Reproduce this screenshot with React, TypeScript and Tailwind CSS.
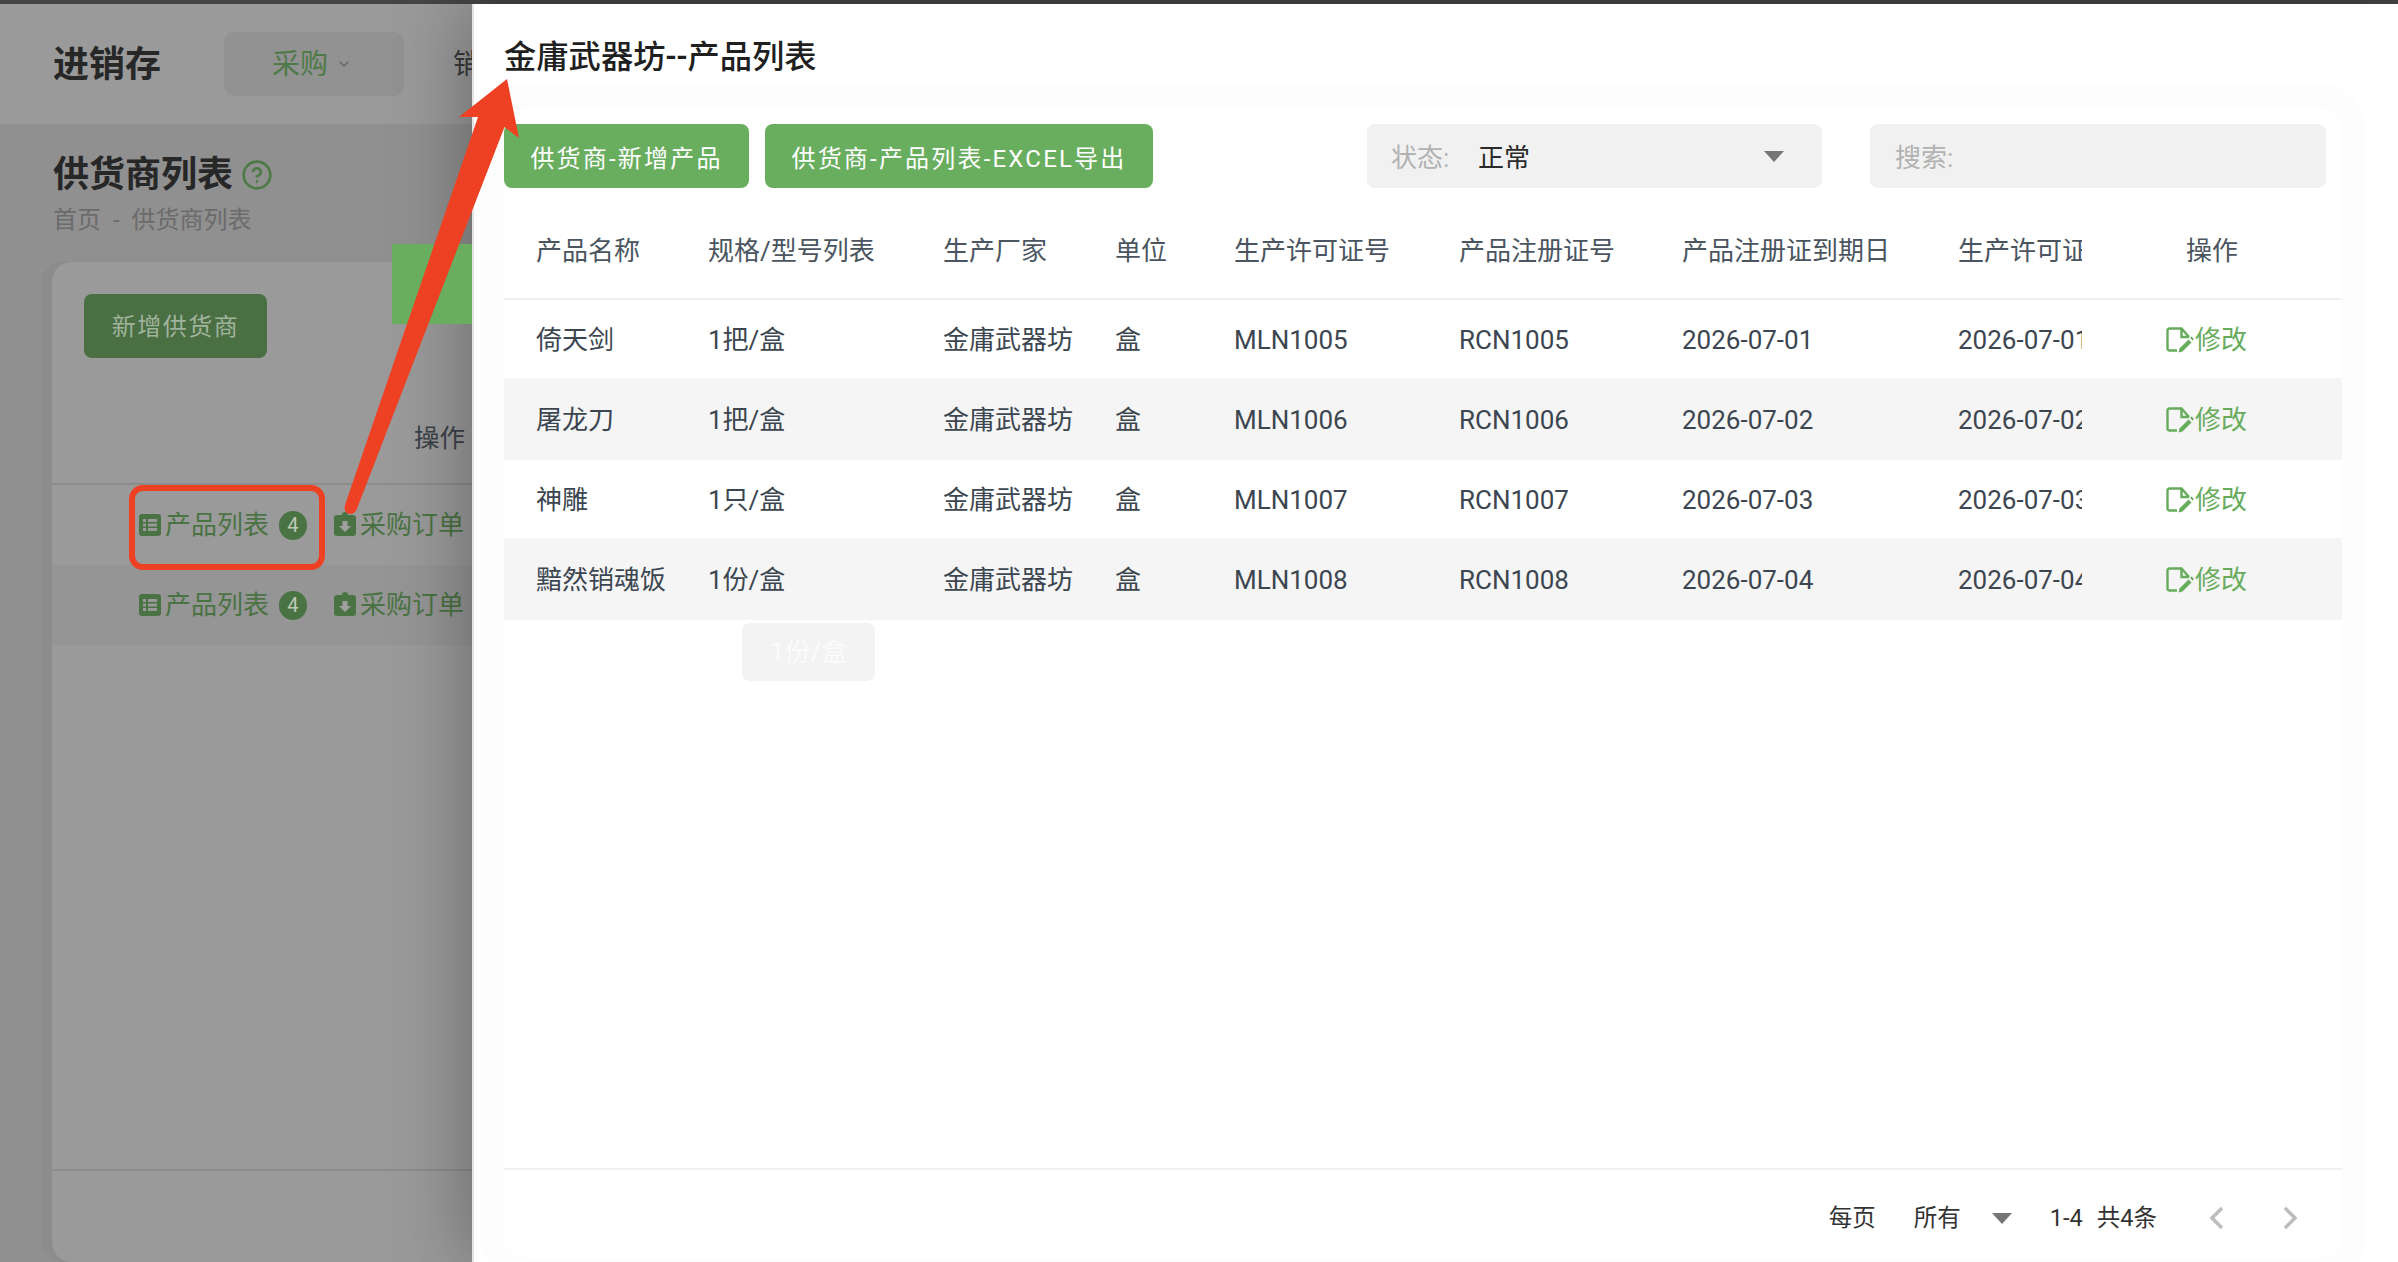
import React from "react";
import { ChevronDown, CircleHelp } from "lucide-react";

const rows = [
  ["倚天剑", "1把/盒", "MLN1005", "RCN1005", "2026-07-01", "h-[78px] bg-white"],
  ["屠龙刀", "1把/盒", "MLN1006", "RCN1006", "2026-07-02", "h-[82px] bg-[#f5f5f5]"],
  ["神雕", "1只/盒", "MLN1007", "RCN1007", "2026-07-03", "h-[78px] bg-white"],
  ["黯然销魂饭", "1份/盒", "MLN1008", "RCN1008", "2026-07-04", "h-[82px] bg-[#f5f5f5]"],
];

const heads = ["产品名称", "规格/型号列表", "生产厂家", "单位", "生产许可证号", "产品注册证号", "产品注册证到期日"];

const cols = "grid grid-cols-[172px_235px_172px_119px_225px_223px_276px_188px_228px] items-center";

function Cell({ children, clip }: { children: React.ReactNode; clip?: boolean }) {
  return (
    <div className="px-8 min-w-0">
      <div className={clip ? "overflow-hidden whitespace-nowrap" : "whitespace-nowrap"}>{children}</div>
    </div>
  );
}

function ListIcon() {
  return (
    <svg width="22" height="22" viewBox="0 0 22 22">
      <rect x="0" y="0" width="22" height="22" rx="3" fill="#4a7343" />
      <g fill="#999999">
        <rect x="4" y="5" width="3" height="3" />
        <rect x="9" y="5" width="9" height="3" />
        <rect x="4" y="9.500" width="3" height="3" />
        <rect x="9" y="9.500" width="9" height="3" />
        <rect x="4" y="14" width="3" height="3" />
        <rect x="9" y="14" width="9" height="3" />
      </g>
    </svg>
  );
}

function OrderIcon() {
  return (
    <svg width="22" height="24" viewBox="0 0 22 24" className="-mt-0.5">
      <path d="M3 3h5a3 3 0 0 1 6 0h5a3 3 0 0 1 3 3v15a3 3 0 0 1-3 3H3a3 3 0 0 1-3-3V6a3 3 0 0 1 3-3z" fill="#4a7343" />
      <path d="M8.500 9h5v5h3.500l-6 6-6-6h3.500z" fill="#9f9f9f" />
    </svg>
  );
}

function EditIcon() {
  return (
    <svg width="28" height="26" viewBox="0 0 28 26" className="shrink-0">
      <path
        d="M11 23.500H3.500a2 2 0 0 1-2-2V3.500a2 2 0 0 1 2-2H15.500l7.500 8.500M15.500 1.500V10H23"
        fill="none"
        stroke="#66ac5c"
        strokeWidth="2.400"
      />
      <path d="M13.500 21.500l9-9 3 3-9 9-4 1z" fill="#66ac5c" />
      <path d="M24 11l1.500-1.500 2.500 2.500-1.500 1.500z" fill="#66ac5c" />
    </svg>
  );
}

function Triangle() {
  return (
    <svg width="20" height="11" viewBox="0 0 20 11">
      <path d="M0 0h20L10 11z" fill="#757575" />
    </svg>
  );
}

function ActionRow({ bg }: { bg: string }) {
  return (
    <div className={`h-[80px] flex items-center justify-end pr-2 text-[26px] text-[#4a7343] ${bg}`}>
      <ListIcon />
      <span className="ml-1">产品列表</span>
      <span className="ml-[10px] w-[28px] h-[29px] rounded-full bg-[#4a7343] text-[#bcc9b9] text-[20px] flex items-center justify-center">4</span>
      <span className="ml-[27px]"><OrderIcon /></span>
      <span className="ml-1">采购订单</span>
    </div>
  );
}

export default function App() {
  return (
    <div
      className="relative w-[2398px] h-[1262px] overflow-hidden flex flex-col bg-white"
      style={{ fontFamily: 'Roboto, "Noto Sans CJK SC", sans-serif' }}
    >
      <div className="h-[4px] shrink-0 bg-[#454545]" />
      <div className="flex-1 flex min-h-0">
        {/* dimmed page */}
        <div className="w-[472px] shrink-0 overflow-hidden flex flex-col bg-[#909090]">
          <div className="h-[120px] shrink-0 bg-[#9a9a9a] flex items-center pl-[53px]">
            <span className="text-[36px] pt-[2px] font-bold text-[#272727] whitespace-nowrap">进销存</span>
            <div className="ml-[63px] w-[180px] h-[64px] shrink-0 rounded-[10px] bg-[#929292] flex items-center pl-[48px] text-[28px] text-[#4e7a47]">
              <span className="pt-[2px]">采购</span>
              <ChevronDown size={16} className="ml-2 text-[#5f6a5c]" />
            </div>
            <span className="ml-[49px] pt-[2px] text-[28px] text-[#3a3a3a] whitespace-nowrap">销售</span>
          </div>
          <div className="pl-[53px] pt-[26px] h-[138px] shrink-0">
            <div className="flex items-center h-[50px]">
              <span className="text-[36px] font-bold text-[#272727] whitespace-nowrap">供货商列表</span>
              <CircleHelp size={32} strokeWidth={2} className="ml-[8px] text-[#4e7a47]" />
            </div>
            <div className="mt-[2px] text-[24px] text-[#6b6b6b] whitespace-pre">首页  -  供货商列表</div>
          </div>
          <div className="ml-[52px] flex-1 min-h-0 rounded-l-[20px] bg-[#9a9a9a] shadow-[-10px_0_0_#8c8c8c] flex flex-col">
            <div className="pl-[32px] pt-[32px] h-[223px] shrink-0 border-b-2 border-[#8c8c8c] relative">
              <div className="w-[183px] h-[64px] pt-[2px] rounded-lg bg-[#4a6f43] text-[#a1b39d] text-[24px] tracking-[1.500px] flex items-center justify-center">新增供货商</div>
              <div className="absolute right-[7px] bottom-[26px] text-[25.500px] text-[#3a4148]">操作</div>
            </div>
            <ActionRow bg="" />
            <ActionRow bg="bg-[#959595]" />
            <div className="flex-1 border-b-2 border-[#8c8c8c]" />
            <div className="h-[91px] shrink-0" />
          </div>
        </div>

        {/* drawer */}
        <div className="relative z-10 flex-1 min-w-0 flex flex-col bg-white border-l-2 border-[#e4e4e4] shadow-[-6px_0_70px_rgba(0,0,0,0.3)] pl-[30px] pr-[56px]">
          <div className="h-[104px] shrink-0 pt-[33px]">
            <div className="text-[32.300px] leading-[40px] font-medium text-[#1f1f1f] whitespace-nowrap">金庸武器坊--产品列表</div>
          </div>
          <div className="relative flex-1 min-h-0 mb-[4px] flex flex-col rounded-[22px] bg-white shadow-[0_0_0_24px_#fdfdfd]">
            <div className="flex items-center pt-4 pr-4 shrink-0">
              <div className="w-[245px] h-[64px] pt-[5px] rounded-lg bg-[#69ae5f] text-white text-[24px] tracking-[2.200px] flex items-center justify-center whitespace-nowrap">供货商-新增产品</div>
              <div className="ml-4 w-[388px] h-[64px] pt-[5px] rounded-lg bg-[#69ae5f] text-white text-[24px] tracking-[2.200px] flex items-center justify-center whitespace-nowrap">供货商-产品列表-EXCEL导出</div>
              <div className="ml-auto w-[455px] h-[64px] rounded-lg bg-[#f1f1f1] flex items-center pl-[24px] pr-[38px] text-[26px]">
                <span className="w-[87px] pt-[5px] text-[#b2b2b2]">状态:</span>
                <span className="pt-[5px] text-[#2a2a2a]">正常</span>
                <span className="ml-auto flex"><Triangle /></span>
              </div>
              <div className="ml-[48px] w-[456px] h-[64px] pt-[5px] rounded-lg bg-[#f1f1f1] flex items-center pl-[25px] text-[26px] text-[#b2b2b2]">搜索:</div>
            </div>

            <div className={`${cols} mt-3 h-[100px] pt-[5px] shrink-0 border-b-2 border-[#f0f0f0] text-[26px] text-[#4a5560]`}>
              {heads.map((h) => (
                <Cell key={h}>{h}</Cell>
              ))}
              <Cell clip>生产许可证到期日</Cell>
              <div className="pl-[72px]">操作</div>
            </div>

            <div className="flex-1 min-h-0 text-[26px] text-[#3c4650]">
              {rows.map((r) => (
                <div key={r[0]} className={`${cols} pt-[2px] ${r[5]}`}>
                  <Cell>{r[0]}</Cell>
                  <Cell>{r[1]}</Cell>
                  <Cell>金庸武器坊</Cell>
                  <Cell>盒</Cell>
                  <Cell>{r[2]}</Cell>
                  <Cell>{r[3]}</Cell>
                  <Cell>{r[4]}</Cell>
                  <Cell clip>{r[4]}</Cell>
                  <div className="pl-[52px] flex items-center text-[#66ac5c]">
                    <EditIcon />
                    <span className="ml-[1px]">修改</span>
                  </div>
                </div>
              ))}
            </div>

            <div className="h-[90px] shrink-0 border-t-2 border-[#f0f0f0] pt-[8px] flex items-center justify-end pr-[44px] text-[23.500px] text-[#333333]">
              <span className="pt-[2px]">每页</span>
              <span className="ml-[38px] pt-[2px]">所有</span>
              <span className="ml-[31px] flex"><Triangle /></span>
              <span className="ml-[38px] pt-[2px]">1-4</span>
              <span className="ml-[14px] pt-[2px]">共4条</span>
              <svg width="16" height="24" viewBox="0 0 16 24" className="ml-[52px]">
                <path d="M13 2L3 12l10 10" fill="none" stroke="#bdbdbd" strokeWidth="3.500" />
              </svg>
              <svg width="16" height="24" viewBox="0 0 16 24" className="ml-[57px]">
                <path d="M3 2l10 10L3 22" fill="none" stroke="#bdbdbd" strokeWidth="3.500" />
              </svg>
            </div>

            <div className="absolute left-[238px] top-[515px] w-[133px] h-[58px] rounded-lg bg-[#f3f3f3] text-[#fbfbfb] text-[26px] flex items-center justify-center">1份/盒</div>
          </div>
        </div>
      </div>

      {/* annotations added on the screenshot */}
      <div className="absolute z-20 left-[392px] top-[244px] w-[80px] h-[80px] bg-[#69ae5f]" />
      <div className="absolute z-20 left-[129px] top-[485px] w-[196px] h-[85px] rounded-[14px] border-[6px] border-[#ee4124]" />
      <svg className="absolute z-30 left-0 top-0" width="600" height="560" viewBox="0 0 600 560">
        <path
          d="M507 79L459 117H478L345 505Q343 513 350 514Q356 514 358 506L504.500 127L519 138z"
          fill="#ee4124"
        />
      </svg>
    </div>
  );
}
